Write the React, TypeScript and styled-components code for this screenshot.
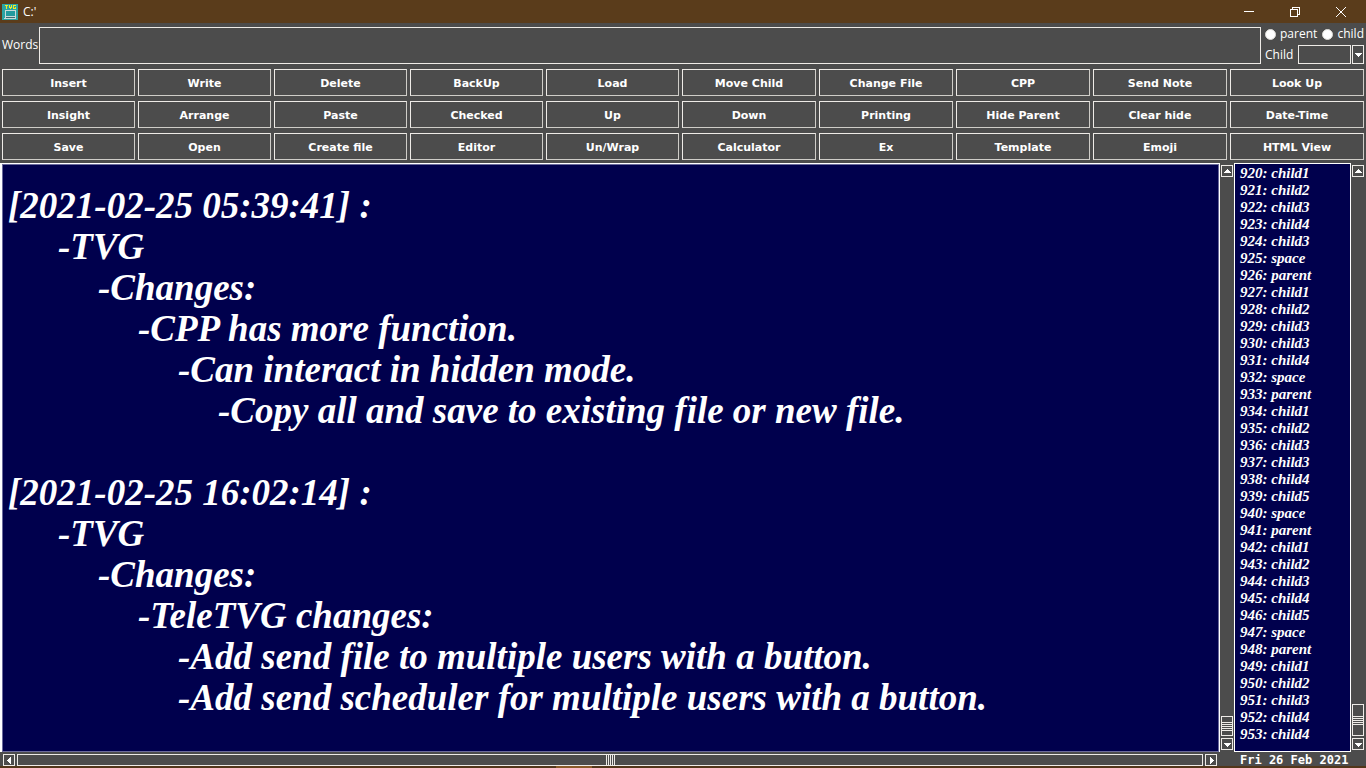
import React from 'react';
import styled, { createGlobalStyle } from 'styled-components';

const GRAY = '#4c4c4c';
const NAVY = '#00004d';
const LIGHT = '#eeebe7';
const BROWN = '#5a3c1b';
const UI_FONT = "'Open Sans', 'Noto Sans', sans-serif";
const SCRIPT_FONT = "Forte, 'Liberation Serif', serif";

const GlobalStyle = createGlobalStyle`
  *, *::before, *::after { box-sizing: border-box; }
  body { margin: 0; background: ${GRAY}; }
  button, input, select, textarea { font: inherit; color: inherit; border-radius: 0; margin: 0; }
`;

const Window = styled.div`
  display: flex;
  flex-direction: column;
  height: 100vh;
  overflow: hidden;
  background: ${GRAY};
  color: #fff;
  font: 12px/16px ${UI_FONT};
`;

const TitleBar = styled.header`
  display: flex;
  align-items: center;
  flex: none;
  height: 23px;
  padding: 0 2px;
  background: ${BROWN};
`;

const Title = styled.h1`
  flex: 1;
  margin: 0 0 0 5px;
  font: inherit;
`;

const CaptionButton = styled.button`
  display: flex;
  align-items: center;
  justify-content: center;
  width: 46px;
  height: 20px;
  padding: 0;
  border: 0;
  background: none;
`;

const EntryRow = styled.div`
  display: flex;
  flex: none;
  padding: 4px 2px 5px;
`;

const WordsLabel = styled.label`
  align-self: center;
  width: 37px;
  padding-bottom: 2px;
`;

const WordsInput = styled.input`
  flex: 1;
  min-width: 0;
  height: 37px;
  padding: 0 6px;
  border: 1px solid ${LIGHT};
  background: ${GRAY};
`;

const Options = styled.div`
  display: flex;
  flex-direction: column;
  justify-content: space-between;
  width: 99px;
  margin-left: 4px;
`;

const OptionLine = styled.div`
  display: flex;
  justify-content: space-between;
  align-items: center;
`;

const RadioLabel = styled.label`
  display: flex;
  align-items: center;
  gap: 4px;
  line-height: 14px;
`;

const Radio = styled.input`
  appearance: none;
  width: 11px;
  height: 11px;
  border: 1px solid #dcdad5;
  border-radius: 50%;
  background: #fff;
`;

const Combo = styled.span`
  display: flex;
  gap: 1px;
`;

const ComboSelect = styled.select`
  appearance: none;
  width: 53px;
  height: 19px;
  padding: 0 2px;
  border: 1px solid ${LIGHT};
  background: ${GRAY};
`;

const ArrowButton = styled.button<{ $tall?: boolean }>`
  display: flex;
  flex: none;
  align-items: center;
  justify-content: center;
  width: 12px;
  height: ${(p) => (p.$tall ? 19 : 12)}px;
  padding: 0;
  border: 1px solid ${LIGHT};
  background: ${GRAY};
`;

const ButtonGrid = styled.div`
  display: grid;
  flex: none;
  grid-template-columns: repeat(5, 133fr) repeat(5, 134fr);
  gap: 5px 3px;
  padding: 0 2px 3px;
`;

const ToolButton = styled.button`
  height: 27px;
  padding: 2px 0 0;
  border: 1px solid;
  border-color: ${LIGHT} #cfcdc8 #cfcdc8 ${LIGHT};
  background: ${GRAY};
  font: bold 11px/14px 'DejaVu Sans', Verdana, sans-serif;
`;

const Workspace = styled.main`
  display: grid;
  flex: 1;
  min-height: 0;
  grid-template-columns: minmax(0, 1fr) 14px 117px 15px;
  grid-template-rows: minmax(0, 1fr) 14px;
`;

const EditorFrame = styled.div`
  display: flex;
  border: 1px solid #fff;
  border-left-width: 2px;
  border-bottom: 0;
`;

const Editor = styled.textarea`
  flex: 1;
  resize: none;
  overflow: hidden;
  padding: 20px 5px 0;
  border: 1px solid #6a6a9c;
  outline: 0;
  background: ${NAVY};
  font: italic bold 37px/41px ${SCRIPT_FONT};
  tab-size: 10px;
  white-space: pre;
`;

const NoteList = styled.ul`
  margin: 0;
  padding: 1px 5px 0;
  overflow: hidden;
  border: 1px solid #fff;
  list-style: none;
  background: ${NAVY};
  font: italic bold 15px/17px ${SCRIPT_FONT};
`;

const VerticalBar = styled.div`
  display: flex;
  flex-direction: column;
  align-items: flex-start;
  padding: 2px 1px;
`;

const Track = styled.div`
  flex: 1;
`;

const VerticalThumb = styled.div<{ $size: number }>`
  display: flex;
  flex-direction: column;
  justify-content: center;
  gap: 1px;
  width: 12px;
  height: ${(p) => p.$size}px;
  margin-bottom: 2px;
  border: 1px solid ${LIGHT};
`;

const HorizontalBar = styled.div`
  display: flex;
  align-items: flex-end;
  gap: 2px;
  grid-column: 1 / 2;
  padding: 0 3px;
`;

const HorizontalThumb = styled.div`
  display: flex;
  flex: 1;
  justify-content: center;
  gap: 1px;
  height: 12px;
  border: 1px solid ${LIGHT};
`;

const Grip = styled.i<{ $upright?: boolean }>`
  width: ${(p) => (p.$upright ? '1px' : 'auto')};
  height: ${(p) => (p.$upright ? 'auto' : '1px')};
  background: ${LIGHT};
`;

const DateLine = styled.time`
  grid-column: 3 / 5;
  padding-left: 6px;
  font: bold 12px/16px 'DejaVu Sans Mono', monospace;
  white-space: nowrap;
`;

const TaskbarEdge = styled.footer`
  display: flex;
  flex: none;
  justify-content: center;
  height: 2px;
  padding-right: 218px;
  background: #52361a;
`;

const TaskbarMark = styled.span`
  width: 36px;
  background: #8a5a28;
`;

type Direction = 'up' | 'down' | 'left' | 'right';

const arrowPath: Record<Direction, string> = {
  up: 'M4 2h1v1h1v1h1v1h1v1H1V5h1V4h1V3h1z',
  down: 'M1 3h7v1H7v1H6v1H5v1H4V6H3V5H2V4H1z',
  left: 'M2 4h1V3h1V2h1V1h1v7H5V7H4V6H3V5H2z',
  right: 'M3 1h1v1h1v1h1v1h1v1H6v1H5v1H4v1H3z',
};

const Arrow = ({ to }: { to: Direction }) => (
  <svg width="9" height="9" viewBox="0 0 9 9" shapeRendering="crispEdges" aria-hidden="true">
    <path d={arrowPath[to]} fill="#fff" />
  </svg>
);

const AppIcon = () => (
  <svg width="16" height="16" viewBox="0 0 16 16" shapeRendering="crispEdges" aria-hidden="true">
    <path fill="#2ba3a3" d="M0 0h16v16H0z" />
    <path fill="#f2ee22" d="M3 1h3v1H5v3H4V2H3zM7 1h1v2h1V1h1v3H9v1H8V4H7zM11 1h3v1h-2v2h1V3h1v2h-3z" />
    <path fill="#c9dada" d="M3 6h11v8H3zM2 14h12v1H2z" />
    <path fill="#229a9e" d="M4 7h9v5H4z" />
    <path fill="#3c6c70" d="M4 13h9v1H4z" />
  </svg>
);

const buttons = [
  'Insert', 'Write', 'Delete', 'BackUp', 'Load', 'Move Child', 'Change File', 'CPP', 'Send Note', 'Look Up',
  'Insight', 'Arrange', 'Paste', 'Checked', 'Up', 'Down', 'Printing', 'Hide Parent', 'Clear hide', 'Date-Time',
  'Save', 'Open', 'Create file', 'Editor', 'Un/Wrap', 'Calculator', 'Ex', 'Template', 'Emoji', 'HTML View',
];

const lines: [number, string][] = [
  [0, '[2021-02-25 05:39:41] :'],
  [5, '-TVG'],
  [9, '-Changes:'],
  [13, '-CPP has more function.'],
  [17, '-Can interact in hidden mode.'],
  [21, '-Copy all and save to existing file or new file.'],
  [0, ''],
  [0, '[2021-02-25 16:02:14] :'],
  [5, '-TVG'],
  [9, '-Changes:'],
  [13, '-TeleTVG changes:'],
  [17, '-Add send file to multiple users with a button.'],
  [17, '-Add send scheduler for multiple users with a button.'],
];
const noteText = lines.map(([tabs, text]) => '\t'.repeat(tabs) + text).join('\n');

const FIRST_ROW = 920;
const kinds = (
  'child1 child2 child3 child4 child3 space parent child1 child2 child3 child3 child4 space parent ' +
  'child1 child2 child3 child3 child4 child5 space parent child1 child2 child3 child4 child5 space ' +
  'parent child1 child2 child3 child4 child4'
).split(' ');

const Grips = ({ upright }: { upright?: boolean }) => (
  <>
    {[0, 1, 2, 3, 4].map((n) => (
      <Grip key={n} $upright={upright} />
    ))}
  </>
);

const VerticalScroll = ({ size, name }: { size: number; name: string }) => (
  <VerticalBar>
    <ArrowButton aria-label={`Scroll ${name} up`}><Arrow to="up" /></ArrowButton>
    <Track />
    <VerticalThumb $size={size}><Grips /></VerticalThumb>
    <ArrowButton aria-label={`Scroll ${name} down`}><Arrow to="down" /></ArrowButton>
  </VerticalBar>
);

export default function App() {
  return (
    <Window>
      <GlobalStyle />
      <TitleBar>
        <AppIcon />
        <Title>C:'</Title>
        <CaptionButton aria-label="Minimize">
          <svg width="10" height="10" viewBox="0 0 10 10" shapeRendering="crispEdges">
            <path d="M0 4h10v1H0z" fill="#fff" />
          </svg>
        </CaptionButton>
        <CaptionButton aria-label="Restore">
          <svg width="10" height="10" viewBox="0 0 10 10" fill="none" stroke="#fff" shapeRendering="crispEdges">
            <path d="M.5 2.5h7v7h-7zM2.500 2V.5h7v7H8" />
          </svg>
        </CaptionButton>
        <CaptionButton aria-label="Close">
          <svg width="10" height="10" viewBox="0 0 10 10" stroke="#fff">
            <path d="M0 0l10 10M10 0L0 10" />
          </svg>
        </CaptionButton>
      </TitleBar>

      <EntryRow>
        <WordsLabel htmlFor="words">Words</WordsLabel>
        <WordsInput id="words" type="text" />
        <Options>
          <OptionLine>
            <RadioLabel><Radio type="radio" name="kind" value="parent" />parent</RadioLabel>
            <RadioLabel><Radio type="radio" name="kind" value="child" />child</RadioLabel>
          </OptionLine>
          <OptionLine>
            <label htmlFor="child-level">Child</label>
            <Combo>
              <ComboSelect id="child-level" />
              <ArrowButton $tall aria-label="Open child list"><Arrow to="down" /></ArrowButton>
            </Combo>
          </OptionLine>
        </Options>
      </EntryRow>

      <ButtonGrid>
        {buttons.map((name) => (
          <ToolButton key={name}>{name}</ToolButton>
        ))}
      </ButtonGrid>

      <Workspace>
        <EditorFrame>
          <Editor aria-label="Notes" defaultValue={noteText} spellCheck={false} />
        </EditorFrame>
        <VerticalScroll size={20} name="notes" />
        <NoteList aria-label="Rows">
          {kinds.map((kind, i) => (
            <li key={i}>{`${FIRST_ROW + i}: ${kind}`}</li>
          ))}
        </NoteList>
        <VerticalScroll size={32} name="rows" />
        <HorizontalBar>
          <ArrowButton aria-label="Scroll notes left"><Arrow to="left" /></ArrowButton>
          <HorizontalThumb><Grips upright /></HorizontalThumb>
          <ArrowButton aria-label="Scroll notes right"><Arrow to="right" /></ArrowButton>
        </HorizontalBar>
        <DateLine dateTime="2021-02-26">Fri 26 Feb 2021</DateLine>
      </Workspace>
      <TaskbarEdge><TaskbarMark /></TaskbarEdge>
    </Window>
  );
}
